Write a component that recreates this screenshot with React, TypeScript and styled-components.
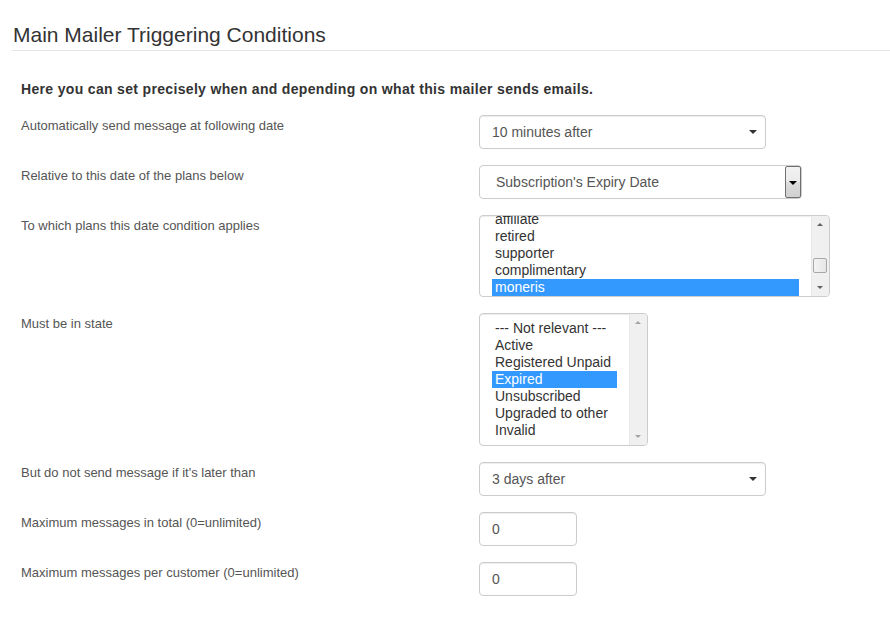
import React from 'react';
import styled, { createGlobalStyle } from 'styled-components';

const GlobalStyle = createGlobalStyle`
  html, body {
    margin: 0;
    padding: 0;
    background: #fff;
  }
  body {
    font-family: "Liberation Sans", Arial, sans-serif;
    color: #333;
  }
`;

const Page = styled.div`
  width: 890px;
  height: 625px;
  overflow: hidden;
`;

const Header = styled.h2`
  margin: 0 0 0 12px;
  padding: 24px 0 4px 1px;
  font-size: 21px;
  font-weight: normal;
  line-height: 22px;
  color: #333;
  border-bottom: 1px solid #e5e5e5;
`;

const Intro = styled.p`
  margin: 29px 0 17px 21px;
  font-size: 14px;
  font-weight: bold;
  letter-spacing: 0.33px;
  line-height: 18px;
  color: #333;
`;

const Form = styled.div`
  display: grid;
  grid-template-columns: 458px 1fr;
  row-gap: 16px;
  padding-left: 21px;
`;

const Label = styled.div`
  padding-top: 1px;
  font-size: 13px;
  line-height: 20px;
  color: #555;
`;

const Control = styled.div`
  display: flex;
  align-items: flex-start;
`;

const SelectBox = styled.div<{ $width: number }>`
  position: relative;
  box-sizing: border-box;
  width: ${(p) => p.$width}px;
  height: 34px;
  padding: 6px 12px;
  font-size: 14px;
  line-height: 20px;
  color: #555;
  background: #fff;
  border: 1px solid #ccc;
  border-radius: 4px;
  box-shadow: inset 0 1px 1px rgba(0, 0, 0, 0.075);
`;

const Caret = styled.span`
  position: absolute;
  right: 8px;
  top: 14px;
  width: 0;
  height: 0;
  border-left: 4px solid transparent;
  border-right: 4px solid transparent;
  border-top: 4px solid #333;
`;

const NativeSelect = styled.div`
  position: relative;
  box-sizing: border-box;
  width: 323px;
  height: 34px;
  padding: 6px 12px 6px 16px;
  font-size: 14px;
  line-height: 20px;
  color: #555;
  background: #fff;
  border: 1px solid #ccc;
  border-radius: 4px;
`;

const DropButton = styled.span`
  position: absolute;
  right: 0;
  top: 0;
  bottom: 0;
  width: 16px;
  box-sizing: border-box;
  border: 1px solid #707070;
  border-radius: 2px;
  background: linear-gradient(#f2f2f2, #ebebeb 50%, #dddddd 51%, #cfcfcf);
  &::after {
    content: '';
    position: absolute;
    left: 3px;
    top: 14px;
    border-left: 4px solid transparent;
    border-right: 4px solid transparent;
    border-top: 4px solid #000;
  }
`;

const ListBox = styled.div<{ $width: number; $height: number }>`
  display: flex;
  box-sizing: border-box;
  width: ${(p) => p.$width}px;
  height: ${(p) => p.$height}px;
  border: 1px solid #ccc;
  border-radius: 4px;
  background: #fff;
  overflow: hidden;
  box-shadow: inset 0 1px 1px rgba(0, 0, 0, 0.075);
`;

const ListArea = styled.div<{ $offset: number }>`
  flex: 1;
  overflow: hidden;
  padding: ${(p) => (p.$offset ? 0 : 6)}px 12px 0 12px;
`;

const ListInner = styled.div<{ $offset: number }>`
  margin-top: ${(p) => -p.$offset}px;
`;

const Option = styled.div<{ $selected?: boolean }>`
  height: 17px;
  font-size: 14px;
  line-height: 17px;
  padding-left: 3px;
  color: ${(p) => (p.$selected ? '#fff' : '#333')};
  background: ${(p) => (p.$selected ? '#3399ff' : 'transparent')};
  white-space: nowrap;
`;

const ScrollTrack = styled.div`
  position: relative;
  width: 17px;
  background: #f0f0f0;
  border-left: 1px solid #e8e8e8;
  flex-shrink: 0;
`;

const Arrow = styled.span<{ $up?: boolean; $disabled?: boolean }>`
  position: absolute;
  left: 5px;
  ${(p) => (p.$up ? 'top: 7px;' : 'bottom: 7px;')}
  width: 0;
  height: 0;
  border-left: 3px solid transparent;
  border-right: 3px solid transparent;
  ${(p) =>
    p.$up
      ? `border-bottom: 3px solid ${p.$disabled ? '#a3a3a3' : '#606060'};`
      : `border-top: 3px solid ${p.$disabled ? '#a3a3a3' : '#606060'};`}
`;

const Thumb = styled.span<{ $top: number }>`
  position: absolute;
  left: 1px;
  width: 14px;
  top: ${(p) => p.$top}px;
  height: 15px;
  box-sizing: border-box;
  border: 1px solid #a8a8a8;
  border-radius: 2px;
  background: linear-gradient(90deg, #f4f4f4, #e6e6e6);
`;

const TextInput = styled.div`
  box-sizing: border-box;
  width: 98px;
  height: 34px;
  padding: 6px 12px;
  font-size: 14px;
  line-height: 20px;
  color: #555;
  background: #fff;
  border: 1px solid #ccc;
  border-radius: 4px;
  box-shadow: inset 0 1px 1px rgba(0, 0, 0, 0.075);
`;

const plans = ['affiliate', 'retired', 'supporter', 'complimentary', 'moneris'];
const states = [
  '--- Not relevant ---',
  'Active',
  'Registered Unpaid',
  'Expired',
  'Unsubscribed',
  'Upgraded to other',
  'Invalid',
];

export default function App() {
  return (
    <Page>
      <GlobalStyle />
      <Header>Main Mailer Triggering Conditions</Header>
      <Intro>Here you can set precisely when and depending on what this mailer sends emails.</Intro>
      <Form>
        <Label>Automatically send message at following date</Label>
        <Control>
          <SelectBox $width={287}>
            10 minutes after
            <Caret />
          </SelectBox>
        </Control>

        <Label>Relative to this date of the plans below</Label>
        <Control>
          <NativeSelect>
            Subscription's Expiry Date
            <DropButton />
          </NativeSelect>
        </Control>

        <Label>To which plans this date condition applies</Label>
        <Control>
          <ListBox $width={351} $height={82}>
            <ListArea $offset={5}>
              <ListInner $offset={5}>
                {plans.map((p) => (
                  <Option key={p} $selected={p === 'moneris'}>
                    {p}
                  </Option>
                ))}
              </ListInner>
            </ListArea>
            <ScrollTrack>
              <Arrow $up />
              <Thumb $top={42} />
              <Arrow />
            </ScrollTrack>
          </ListBox>
        </Control>

        <Label>Must be in state</Label>
        <Control>
          <ListBox $width={169} $height={133}>
            <ListArea $offset={0}>
              <ListInner $offset={0}>
                {states.map((s) => (
                  <Option key={s} $selected={s === 'Expired'}>
                    {s}
                  </Option>
                ))}
              </ListInner>
            </ListArea>
            <ScrollTrack>
              <Arrow $up $disabled />
              <Arrow $disabled />
            </ScrollTrack>
          </ListBox>
        </Control>

        <Label>But do not send message if it's later than</Label>
        <Control>
          <SelectBox $width={287}>
            3 days after
            <Caret />
          </SelectBox>
        </Control>

        <Label>Maximum messages in total (0=unlimited)</Label>
        <Control>
          <TextInput>0</TextInput>
        </Control>

        <Label>Maximum messages per customer (0=unlimited)</Label>
        <Control>
          <TextInput>0</TextInput>
        </Control>
      </Form>
    </Page>
  );
}
